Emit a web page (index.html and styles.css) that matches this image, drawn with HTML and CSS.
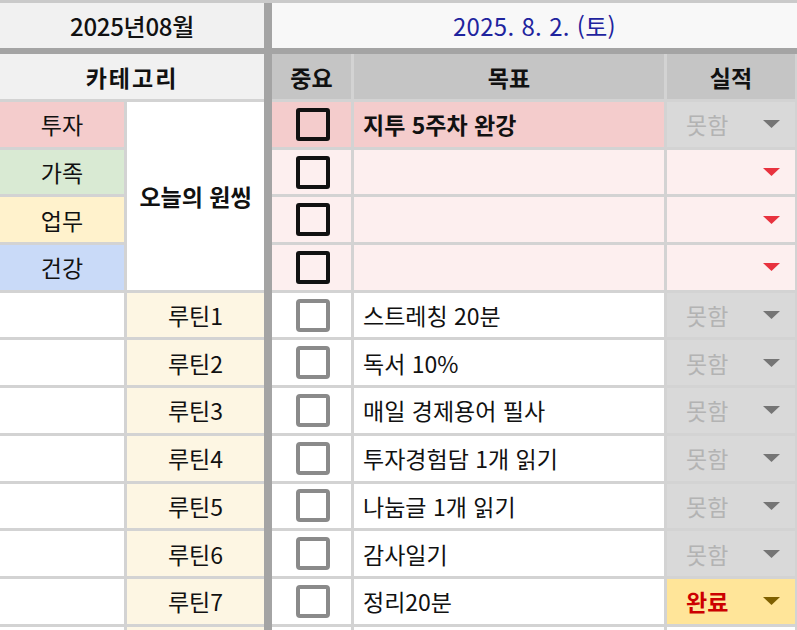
FILE: index.html
```html
<!DOCTYPE html>
<html lang="ko">
<head>
<meta charset="utf-8">
<title>2025년08월</title>
<link rel="stylesheet" href="styles.css">
</head>
<body>
<div class="sheet">
  <div class="bar"></div>

  <div class="cell title span-ab">2025년08월</div>
  <div class="cell title date span-ce">2025. 8. 2. (토)</div>

  <div class="cell head-light span-ab">카테고리</div>
  <div class="cell head c-c">중요</div>
  <div class="cell head c-d center">목표</div>
  <div class="cell head c-e center">실적</div>

  <div class="cell cat pink c-a">투자</div>
  <div class="cell oneth c-b">오늘의 원씽</div>
  <div class="cell c-c pink"><span class="box dark"></span></div>
  <div class="cell c-d pink goal bold">지투 5주차 완강</div>
  <div class="cell c-e status gray"><span class="muted">못함</span><svg class="tri" viewBox="0 0 17 8"><polygon points="0,0 17,0 8.5,8" fill="#757575"/></svg></div>

  <div class="cell cat green c-a">가족</div>
  <div class="cell c-c pale"><span class="box dark"></span></div>
  <div class="cell c-d pale goal"></div>
  <div class="cell c-e status pale"><svg class="tri" viewBox="0 0 17 8"><polygon points="0,0 17,0 8.5,8" fill="#e8323e"/></svg></div>

  <div class="cell cat yellow c-a">업무</div>
  <div class="cell c-c pale"><span class="box dark"></span></div>
  <div class="cell c-d pale goal"></div>
  <div class="cell c-e status pale"><svg class="tri" viewBox="0 0 17 8"><polygon points="0,0 17,0 8.5,8" fill="#e8323e"/></svg></div>

  <div class="cell cat blue c-a">건강</div>
  <div class="cell c-c pale"><span class="box dark"></span></div>
  <div class="cell c-d pale goal"></div>
  <div class="cell c-e status pale"><svg class="tri" viewBox="0 0 17 8"><polygon points="0,0 17,0 8.5,8" fill="#e8323e"/></svg></div>

  <div class="cell c-a"></div>
  <div class="cell cream c-b">루틴1</div>
  <div class="cell c-c"><span class="box"></span></div>
  <div class="cell c-d goal">스트레칭 20분</div>
  <div class="cell c-e status gray"><span class="muted">못함</span><svg class="tri" viewBox="0 0 17 8"><polygon points="0,0 17,0 8.5,8" fill="#757575"/></svg></div>

  <div class="cell c-a"></div>
  <div class="cell cream c-b">루틴2</div>
  <div class="cell c-c"><span class="box"></span></div>
  <div class="cell c-d goal">독서 10%</div>
  <div class="cell c-e status gray"><span class="muted">못함</span><svg class="tri" viewBox="0 0 17 8"><polygon points="0,0 17,0 8.5,8" fill="#757575"/></svg></div>

  <div class="cell c-a"></div>
  <div class="cell cream c-b">루틴3</div>
  <div class="cell c-c"><span class="box"></span></div>
  <div class="cell c-d goal">매일 경제용어 필사</div>
  <div class="cell c-e status gray"><span class="muted">못함</span><svg class="tri" viewBox="0 0 17 8"><polygon points="0,0 17,0 8.5,8" fill="#757575"/></svg></div>

  <div class="cell c-a"></div>
  <div class="cell cream c-b">루틴4</div>
  <div class="cell c-c"><span class="box"></span></div>
  <div class="cell c-d goal">투자경험담 1개 읽기</div>
  <div class="cell c-e status gray"><span class="muted">못함</span><svg class="tri" viewBox="0 0 17 8"><polygon points="0,0 17,0 8.5,8" fill="#757575"/></svg></div>

  <div class="cell c-a"></div>
  <div class="cell cream c-b">루틴5</div>
  <div class="cell c-c"><span class="box"></span></div>
  <div class="cell c-d goal">나눔글 1개 읽기</div>
  <div class="cell c-e status gray"><span class="muted">못함</span><svg class="tri" viewBox="0 0 17 8"><polygon points="0,0 17,0 8.5,8" fill="#757575"/></svg></div>

  <div class="cell c-a"></div>
  <div class="cell cream c-b">루틴6</div>
  <div class="cell c-c"><span class="box"></span></div>
  <div class="cell c-d goal">감사일기</div>
  <div class="cell c-e status gray"><span class="muted">못함</span><svg class="tri" viewBox="0 0 17 8"><polygon points="0,0 17,0 8.5,8" fill="#757575"/></svg></div>

  <div class="cell c-a"></div>
  <div class="cell cream c-b">루틴7</div>
  <div class="cell c-c"><span class="box"></span></div>
  <div class="cell c-d goal">정리20분</div>
  <div class="cell c-e status done"><span class="done-text">완료</span><svg class="tri" viewBox="0 0 17 8"><polygon points="0,0 17,0 8.5,8" fill="#7f6000"/></svg></div>

  <div class="cell c-a"></div>
  <div class="cell cream c-b"></div>
  <div class="cell c-c"></div>
  <div class="cell c-d goal"></div>
  <div class="cell c-e status"></div>
</div>
</body>
</html>
```
FILE: styles.css
```css
html, body {
  margin: 0;
  padding: 0;
  overflow: hidden;
  background: #ffffff;
}

.sheet {
  display: grid;
  grid-template-columns: 127px 137px 8px 82px 313px 130px;
  grid-template-rows: 51px 48px repeat(12, 47.7px);
  border-top: 3px solid #cacaca;
  font-family: "Noto Sans CJK KR", "Noto Sans", sans-serif;
  font-size: 23px;
  color: #111111;
  width: 797px;
}

.bar {
  grid-column: 3;
  grid-row: 1 / -1;
  background: #a4a4a4;
}

.cell {
  box-sizing: border-box;
  display: flex;
  align-items: center;
  justify-content: center;
  border-bottom: 3px solid #d3d3d3;
  background: #ffffff;
  white-space: nowrap;
  overflow: hidden;
}

.span-ab { grid-column: 1 / 3; }
.span-ce { grid-column: 4 / 7; }
.c-a { grid-column: 1; border-right: 3px solid #d3d3d3; }
.c-b { grid-column: 2; }
.c-c { grid-column: 4; border-right: 3px solid #d3d3d3; }
.c-d { grid-column: 5; border-right: 3px solid #d3d3d3; }
.c-e { grid-column: 6; border-right: 2px solid #d3d3d3; }

.title {
  background: #f1f1f1;
  border-bottom: 6px solid #a4a4a4;
  font-weight: 500;
  font-size: 24px;
  letter-spacing: -0.3px;
}
.title.date {
  background: #f8f8f8;
  color: #1f249e;
  font-weight: 400;
  letter-spacing: 0.3px;
}

.head-light {
  background: #f1f1f1;
  font-weight: 700;
  letter-spacing: 2px;
}
.head {
  background: #c5c5c5;
  font-weight: 700;
  border-right-color: #d3d3d3;
}

.oneth {
  grid-row: 3 / 7;
  font-weight: 700;
}

.pink { background: #f4cccc; }
.green { background: #d9ead3; }
.yellow { background: #fff2cc; }
.blue { background: #c9daf8; }
.pale { background: #fdefef; }
.cream { background: #fdf6e3; }
.gray { background: #d9d9d9; }
.done { background: #ffe599; }

.goal {
  justify-content: flex-start;
  padding-left: 9px;
}
.bold { font-weight: 700; }

.status {
  justify-content: flex-start;
  padding: 0 15px 0 19px;
}
.status .tri {
  width: 17px;
  height: 8px;
  margin-left: auto;
}
.muted { color: #b3b3b3; }
.done-text { color: #cc0000; font-weight: 700; }

.box {
  box-sizing: border-box;
  width: 34px;
  height: 33px;
  border: 4px solid #8a8a8a;
  border-radius: 4px;
  margin-left: 3px;
}
.box.dark {
  border-color: #111111;
  border-radius: 3px;
}
```
